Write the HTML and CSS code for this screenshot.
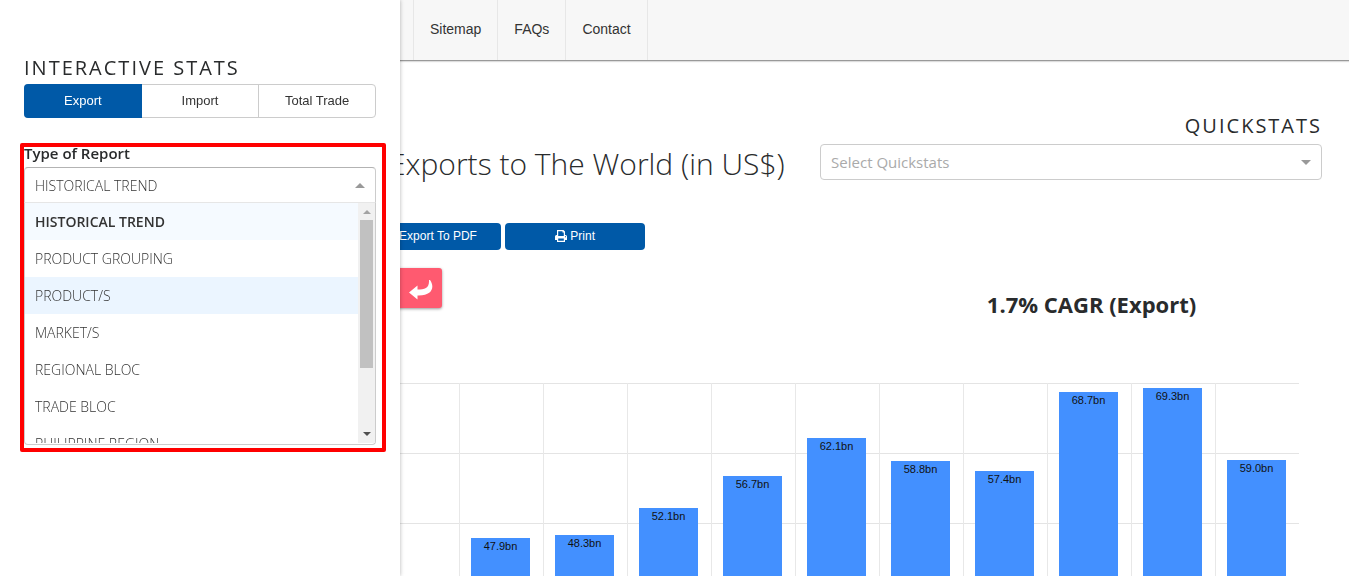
FILE: index.html
```html
<!DOCTYPE html>
<html lang="en">
<head>
<meta charset="utf-8">
<title>Interactive Stats</title>
<link rel="stylesheet" href="styles.css">
</head>
<body>
<div class="page">
  <header class="topbar">
    <nav class="topnav">
      <a href="#">Sitemap</a>
      <a href="#">FAQs</a>
      <a href="#">Contact</a>
    </nav>
  </header>
  <main class="content">
    <section class="intro">
      <h1 class="title">Exports to The World (in US$)</h1>
      <div class="quickstats">
        <label class="section-heading" for="quickstats">QUICKSTATS</label>
        <div class="select-box">
          <select id="quickstats" class="select placeholder"><option>Select Quickstats</option></select>
          <svg class="caret" viewBox="0 0 10 5" aria-hidden="true"><path d="M0 0h10L5 5z"/></svg>
        </div>
      </div>
    </section>
    <div class="actions">
      <button class="action pdf" type="button">Export To PDF</button>
      <button class="action" type="button">
        <svg class="print-icon" viewBox="0 0 12 12" aria-hidden="true"><path fill-rule="evenodd" d="M2 0h6.500L10 1.500V5h.5A1.500 1.500 0 0 1 12 6.500V10h-2v2H2v-2H0V6.500A1.500 1.500 0 0 1 1.500 5H2zM3.200 1.200V6h5.600V2.500H7.500V1.200zM3.200 8.500v2.300h5.600V8.500zM10 6.300v1h1v-1z"/></svg>
        Print</button>
    </div>
    <div class="summary">
      <button class="back" type="button" aria-label="Back">
        <svg viewBox="0 0 24 20" aria-hidden="true"><path d="M0 12.500 8.500 5.500V9.500C16 9.500 20.500 8 20 0h1C25.500 6 24.500 16 8.500 15.500V19.500z"/></svg>
      </button>
      <h2 class="growth">1.7% CAGR (Export)</h2>
    </div>
    <div class="chart">
      <div class="slot"></div>
      <div class="slot"><div class="bar" style="--value:47.9">47.9bn</div></div>
      <div class="slot"><div class="bar" style="--value:48.3">48.3bn</div></div>
      <div class="slot"><div class="bar" style="--value:52.1">52.1bn</div></div>
      <div class="slot"><div class="bar" style="--value:56.7">56.7bn</div></div>
      <div class="slot"><div class="bar" style="--value:62.1">62.1bn</div></div>
      <div class="slot"><div class="bar" style="--value:58.8">58.8bn</div></div>
      <div class="slot"><div class="bar" style="--value:57.4">57.4bn</div></div>
      <div class="slot"><div class="bar" style="--value:68.7">68.7bn</div></div>
      <div class="slot"><div class="bar" style="--value:69.3">69.3bn</div></div>
      <div class="slot"><div class="bar" style="--value:59">59.0bn</div></div>
    </div>
  </main>
</div>
<aside class="drawer">
  <h2 class="section-heading">INTERACTIVE STATS</h2>
  <div class="tabs">
    <button class="tab active" type="button">Export</button>
    <button class="tab" type="button">Import</button>
    <button class="tab" type="button">Total Trade</button>
  </div>
  <section class="report">
    <label class="report-label" for="report">Type of Report</label>
    <div class="select-box open">
      <select id="report" class="select"><option>HISTORICAL TREND</option></select>
      <svg class="caret" viewBox="0 0 10 5" aria-hidden="true"><path d="M0 5h10L5 0z"/></svg>
    </div>
    <div class="menu">
      <ul class="options" role="listbox" aria-label="Type of Report">
        <li class="option selected" role="option" aria-selected="true">HISTORICAL TREND</li>
        <li class="option" role="option">PRODUCT GROUPING</li>
        <li class="option focused" role="option">PRODUCT/S</li>
        <li class="option" role="option">MARKET/S</li>
        <li class="option" role="option">REGIONAL BLOC</li>
        <li class="option" role="option">TRADE BLOC</li>
        <li class="option" role="option">PHILIPPINE REGION</li>
      </ul>
      <div class="scrollbar" aria-hidden="true">
        <svg class="arrow up" viewBox="0 0 8 4"><path d="M0 4h8L4 0z"/></svg>
        <div class="track"><div class="thumb"></div></div>
        <svg class="arrow" viewBox="0 0 8 4"><path d="M0 0h8L4 4z"/></svg>
      </div>
    </div>
  </section>
</aside>
</body>
</html>
```
FILE: styles.css
```css
* { box-sizing: border-box; }

body {
  margin: 0;
  background: #fff;
  color: #292b2c;
  font-family: "Open Sans", "Noto Sans", sans-serif;
}

h1, h2, ul { margin: 0; padding: 0; }

.page {
  height: 100vh;
  overflow: hidden;
}

.topbar {
  height: 61px;
  padding-left: 413px;
  background: #f7f7f7;
  border-bottom: 1px solid #999;
  box-shadow: 0 1px 1px #ddd;
}

.topnav {
  display: flex;
  height: 100%;
  width: max-content;
  border-left: 1px solid #e7e7e7;
}

.topnav a {
  padding: 0 16px;
  border-right: 1px solid #e7e7e7;
  color: #333;
  font: 14px/58px "Liberation Sans", Arial, sans-serif;
  text-decoration: none;
}

.content { padding: 53px 27px 0 375px; }

.intro {
  display: flex;
  justify-content: space-between;
}

.title {
  padding: 26px 0 0 14px;
  font-size: 30px;
  font-weight: 300;
  line-height: 48px;
  white-space: nowrap;
}

.quickstats { width: 53%; text-align: right; }

.section-heading {
  display: block;
  font-size: 20px;
  font-weight: 500;
  letter-spacing: 2px;
  line-height: 24px;
}

.quickstats .select-box { margin-top: 6px; }

.select-box {
  display: grid;
  grid-template-columns: 1fr 21px;
  align-items: center;
}

.select {
  grid-area: 1 / 1 / 2 / 3;
  width: 100%;
  height: 36px;
  padding: 0 10px;
  appearance: none;
  background: #fff;
  border: 1px solid #ccc;
  border-radius: 4px;
  color: #333;
  font: 300 14px "Open Sans", sans-serif;
}

.placeholder {
  color: #aaa;
  font-size: 15px;
  font-weight: 400;
}

.caret {
  grid-area: 1 / 2;
  width: 10px;
  height: 5px;
  fill: #999;
  pointer-events: none;
}

.actions {
  display: flex;
  gap: 4px;
  margin-top: 35px;
}

.action {
  width: 140px;
  height: 27px;
  padding: 0 0 2px;
  background: #0059a7;
  border: 0;
  border-radius: 4px;
  color: #fff;
  font: 12px "Liberation Sans", Arial, sans-serif;
}

.action.pdf {
  width: 126px;
  border-radius: 0 4px 4px 0;
}

.print-icon {
  width: 12px;
  height: 12px;
  fill: #fff;
  vertical-align: -2px;
}

.summary {
  display: flex;
  align-items: flex-start;
  margin-top: 18px;
  height: 115px;
}

.back {
  display: flex;
  justify-content: flex-end;
  align-items: center;
  width: 67px;
  height: 40px;
  padding: 4px 9px 0 0;
  background: #ff5a70;
  border: 0;
  border-radius: 3px;
  box-shadow: 0 1px 3px #999;
}

.back svg {
  width: 24px;
  height: 20px;
  fill: #fff;
}

.growth {
  flex: 1;
  padding: 20px 0 0 419px;
  text-align: center;
  font-size: 22px;
  line-height: 32px;
}

.chart {
  display: grid;
  grid-template-columns: repeat(11, 1fr);
  height: 490px;
  margin-right: 23px;
  background: repeating-linear-gradient(#e4e4e4 0 1px, transparent 1px 70px);
}

.slot {
  display: flex;
  flex-direction: column;
  justify-content: flex-end;
  align-items: center;
  padding-right: 2px;
  border-left: 1px solid #e8e8e8;
}

.bar {
  width: 74%;
  height: calc(var(--value) * 7px);
  background: #4390ff;
  color: #111;
  font: 11px/16px "Liberation Sans", Arial, sans-serif;
  text-align: center;
}

.drawer {
  position: fixed;
  inset: 0 auto 0 0;
  width: 400px;
  padding: 56px 24px 0;
  background: #fff;
  box-shadow: 0 0 4px rgba(0, 0, 0, 0.3);
}

.tabs {
  display: grid;
  grid-template-columns: repeat(3, 1fr);
  height: 34px;
  margin-top: 4px;
  border: 1px solid #ccc;
  border-radius: 4px;
}

.tab {
  padding: 0 0 2px;
  background: none;
  border: 0;
  border-left: 1px solid #ccc;
  color: #333;
  font: 13px "Liberation Sans", Arial, sans-serif;
}

.tab.active {
  margin: -1px 0 -1px -1px;
  background: #0059a7;
  border: 0;
  border-radius: 4px 0 0 4px;
  color: #fff;
}

.tab.active + .tab { border-left: 0; }

.report {
  position: relative;
  margin-top: 26px;
}

.report::after {
  content: "";
  position: absolute;
  inset: -1px -10px -7px -4px;
  border: 4px solid #f00;
  border-radius: 2px;
  pointer-events: none;
}

.report-label {
  display: block;
  font-size: 15px;
  font-weight: 600;
  line-height: 18px;
  padding-bottom: 5px;
}

.open .select {
  border-color: #b3b3b3 #ccc #e6e6e6;
  border-radius: 4px 4px 0 0;
}

.menu {
  display: flex;
  height: 242px;
  padding-bottom: 1px;
  border: 1px solid #ccc;
  border-top: 0;
  border-radius: 0 0 4px 4px;
}

.options {
  flex: 1;
  overflow: hidden;
  list-style: none;
}

.option {
  padding: 0 10px;
  color: #333;
  font-size: 14px;
  font-weight: 300;
  line-height: 37px;
}

.option.selected { background: #f5faff; font-weight: 600; }
.option.focused { background: #ebf5ff; }

.scrollbar {
  display: flex;
  flex-direction: column;
  align-items: center;
  width: 17px;
  padding: 7px 2px;
  background: #f1f1f1;
}

.arrow { width: 8px; height: 4px; fill: #505050; }
.arrow.up { fill: #a3a3a3; }

.track {
  flex: 1;
  width: 100%;
  padding: 6px 0;
}

.thumb {
  height: 72%;
  background: #c1c1c1;
}
```
